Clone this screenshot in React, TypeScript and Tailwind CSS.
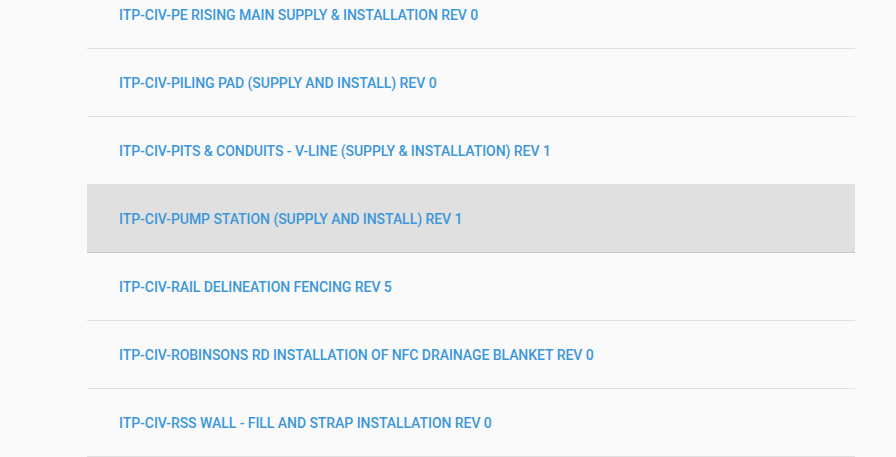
import React from 'react';

const items = [
  'ITP-CIV-PE RISING MAIN SUPPLY & INSTALLATION REV 0',
  'ITP-CIV-PILING PAD (SUPPLY AND INSTALL) REV 0',
  'ITP-CIV-PITS & CONDUITS - V-LINE (SUPPLY & INSTALLATION) REV 1',
  'ITP-CIV-PUMP STATION (SUPPLY AND INSTALL) REV 1',
  'ITP-CIV-RAIL DELINEATION FENCING REV 5',
  'ITP-CIV-ROBINSONS RD INSTALLATION OF NFC DRAINAGE BLANKET REV 0',
  'ITP-CIV-RSS WALL - FILL AND STRAP INSTALLATION REV 0',
];

const App: React.FC = () => {
  const active = 3;

  return (
    <div className="w-[896px] h-[457px] overflow-hidden bg-[#fafafa]" style={{ fontFamily: 'Roboto, "Liberation Sans", sans-serif' }}>
      <ul className="ml-[87px] w-[768px] -mt-[19px]">
        {items.map((item, i) => (
          <li
            key={item}
            className={`h-[68px] flex items-center pl-[32px] pt-[1px] border-b ${
              i === active ? 'bg-[#e0e0e0] border-[#c8c8c8]' : 'border-[#e0e0e0]'
            }`}
          >
            <span className="text-[14px] font-medium text-[#3b97dc] tracking-[-0.05px]">{item}</span>
          </li>
        ))}
      </ul>
    </div>
  );
};

export default App;
